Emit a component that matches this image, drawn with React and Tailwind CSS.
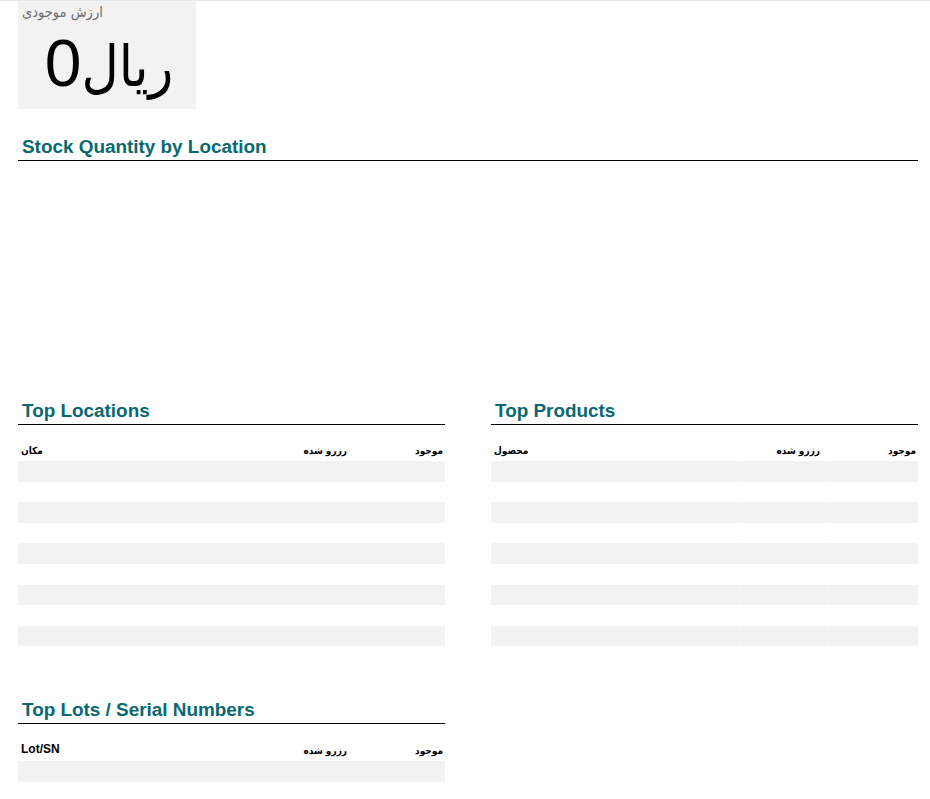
import React from "react";

const locationRows = [1, 2, 3, 4, 5];
const productRows = [1, 2, 3, 4, 5];
const lotRows = [1, 2, 3, 4, 5];

const SectionTitle = ({ children }) => (
    <h2 className="text-[18.9px] leading-[22px] font-bold text-[#0a6870] pl-[4px] pt-[2px] pb-[2px] border-b border-black">
        {children}
    </h2>
);

const StripedTable = ({ first, rows, lined, firstLatin }) => (
    <table className="w-full mt-[16px] border-collapse table-fixed">
        <thead>
            <tr className="h-[20px]">
                <th
                    className={
                        "text-left align-bottom pb-[3px] pl-[3px] font-bold text-black " +
                        (firstLatin ? "text-[12px]" : "text-[10px] font-['DejaVu_Sans_Condensed',sans-serif]")
                    }
                >
                    {first}
                </th>
                <th className="w-[89px] text-right align-bottom pb-[3px] pr-[8px] text-[10px] font-bold text-black font-['DejaVu_Sans_Condensed',sans-serif]">
                    رزرو شده
                </th>
                <th className="w-[90px] text-right align-bottom pb-[3px] pr-[2px] text-[10px] font-bold text-black font-['DejaVu_Sans_Condensed',sans-serif]">
                    موجود
                </th>
            </tr>
        </thead>
        <tbody>
            {rows.map((r) => (
                <React.Fragment key={r}>
                    <tr className="h-[20.6px] bg-[#f2f2f2]">
                        <td></td>
                        <td className={lined ? "border-l border-[#f7f7f7]" : ""}></td>
                        <td className={lined ? "border-l border-[#f7f7f7]" : ""}></td>
                    </tr>
                    <tr className="h-[20.6px] bg-white">
                        <td></td>
                        <td></td>
                        <td></td>
                    </tr>
                </React.Fragment>
            ))}
        </tbody>
    </table>
);

const App = () => {
    return (
        <div className="min-h-screen bg-white border-t border-[#e3e6ea] pl-[18px] pr-[12px] font-['Liberation_Sans','DejaVu_Sans',sans-serif]">
            {/* Inventory value card */}
            <div className="w-[178px] h-[108px] bg-[#f2f2f2] flex flex-col">
                <div className="text-[14.5px] leading-[16px] text-[#6b6b6b] pl-[4px] pt-[3px] text-left font-['DejaVu_Sans_Condensed',sans-serif]">
                    ارزش موجودی
                </div>
                <div className="flex items-baseline justify-center leading-none text-black mt-[10px] pl-[4px]">
                    <span className="text-[66px] font-['Liberation_Sans',sans-serif]">0</span>
                    <span className="text-[57px] font-['DejaVu_Sans_Condensed',sans-serif]">ریال</span>
                </div>
            </div>

            {/* Stock chart */}
            <div className="mt-[25px]">
                <SectionTitle>Stock Quantity by Location</SectionTitle>
                <div className="h-[237px]"></div>
            </div>

            <div className="grid grid-cols-2 gap-x-[46px]">
                <div>
                    <SectionTitle>Top Locations</SectionTitle>
                    <StripedTable first="مکان" rows={locationRows} />
                </div>
                <div>
                    <SectionTitle>Top Products</SectionTitle>
                    <StripedTable first="محصول" rows={productRows} lined />
                </div>
                <div className="mt-[30px] pb-[20px]">
                    <SectionTitle>Top Lots / Serial Numbers</SectionTitle>
                    <StripedTable first="Lot/SN" rows={lotRows} firstLatin />
                </div>
            </div>
        </div>
    );
};

export default App;
